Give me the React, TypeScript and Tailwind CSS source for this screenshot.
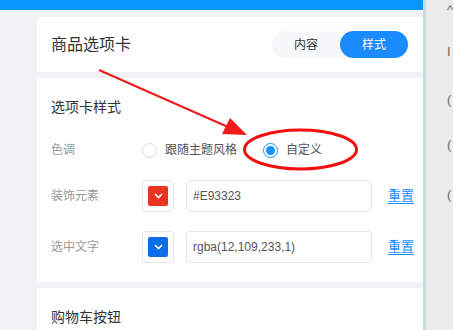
import React from "react";

const font = { fontFamily: '"Liberation Sans", "Noto Sans CJK SC", sans-serif' };

function Swatch({ color }: { color: string }) {
  return (
    <div className="w-[32px] h-[32px] rounded-[3px] border border-[#e8e8e8] bg-white flex items-center justify-center">
      <div className={`w-[20px] h-[20px] rounded-[2px] flex items-center justify-center ${color}`}>
        <svg width="9" height="6" viewBox="0 0 9 6" fill="none">
          <path d="M1 1 L4.5 4.5 L8 1" stroke="white" strokeWidth="1.6" />
        </svg>
      </div>
    </div>
  );
}

function ColorRow({ label, color, value, mt }: { label: string; color: string; value: string; mt: string }) {
  return (
    <div className={`flex items-center h-[32px] ${mt}`}>
      <div className="w-[91px] text-[12px] text-[#999]">{label}</div>
      <Swatch color={color} />
      <div className="ml-[12px] w-[186px] h-[32px] rounded-[3px] border border-[#e8e8e8] flex items-center px-[6px] text-[12px] text-[#555]">
        {value}
      </div>
      <div className="ml-[16px] text-[13px] text-[#1890ff] underline underline-offset-[3px]">重置</div>
    </div>
  );
}

export default function App() {
  return (
    <div className="w-[453px] h-[330px] overflow-hidden flex relative" style={font}>
      <div className="w-[427px] h-full bg-[#f0f2f5] flex flex-col">
        <div className="h-[10px] bg-[#0897fd] shrink-0" />
        <div className="pl-[37px] flex flex-col">
          <div className="mt-[7px] h-[55px] bg-white flex items-center justify-between pl-[14px] pr-[15px]">
            <div className="text-[16px] text-[#333]">商品选项卡</div>
            <div className="w-[136px] h-[27px] rounded-full bg-[#f6f7f9] flex text-[12px]">
              <div className="flex-1 flex items-center justify-center text-[#333]">内容</div>
              <div className="w-[68px] rounded-full bg-[#1a8cff] text-white flex items-center justify-center">样式</div>
            </div>
          </div>
          <div className="mt-[6px] h-[204px] bg-white pl-[14px] pt-[19px] flex flex-col">
            <div className="text-[14px] text-[#333] leading-[20px]">选项卡样式</div>
            <div className="mt-[17px] h-[32px] flex items-center">
              <div className="w-[91px] text-[12px] text-[#999]">色调</div>
              <div className="flex items-center">
                <div className="w-[15px] h-[15px] rounded-full border border-[#d9d9d9] bg-white" />
                <div className="ml-[8px] text-[12px] text-[#555]">跟随主题风格</div>
              </div>
              <div className="flex items-center ml-[26px]">
                <div className="w-[15px] h-[15px] rounded-full border border-[#1890ff] bg-white flex items-center justify-center">
                  <div className="w-[9px] h-[9px] rounded-full bg-[#1890ff]" />
                </div>
                <div className="ml-[8px] text-[12px] text-[#555]">自定义</div>
              </div>
            </div>
            <ColorRow label="装饰元素" color="bg-[#e93323]" value="#E93323" mt="mt-[14px]" />
            <ColorRow label="选中文字" color="bg-[rgb(12,109,233)]" value="rgba(12,109,233,1)" mt="mt-[19px]" />
          </div>
          <div className="mt-[6px] h-[60px] bg-white pl-[14px] pt-[19px]">
            <div className="text-[14px] text-[#333] leading-[20px]">购物车按钮</div>
          </div>
        </div>
      </div>
      <div className="w-[3px] h-full bg-[#c8dcdf]" />
      <div className="flex-1 h-full bg-[#ececec] pl-[21px] text-[13px] text-[#666] flex flex-col">
        <div className="mt-[2px] leading-[16px]">^</div>
        <div className="mt-[26px] leading-[16px]">I</div>
        <div className="mt-[32px] leading-[16px]">(</div>
        <div className="mt-[29px] leading-[16px]">(</div>
        <div className="mt-[34px] leading-[16px]">(</div>
      </div>
      <svg className="absolute left-0 top-0 pointer-events-none" width="453" height="330" viewBox="0 0 453 330">
        <line x1="99" y1="70" x2="228" y2="127" stroke="#f01a1a" strokeWidth="2" />
        <polygon points="247,135 222,134 230,118" fill="#f01a1a" />
        <ellipse cx="300.5" cy="149.5" rx="56" ry="19.5" fill="none" stroke="#f01010" strokeWidth="3" />
      </svg>
    </div>
  );
}
